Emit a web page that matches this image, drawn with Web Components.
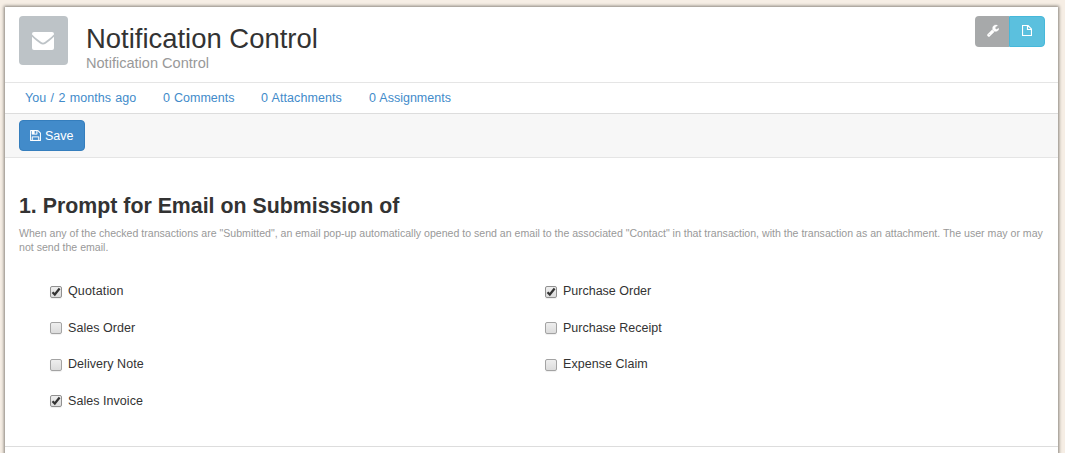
<!DOCTYPE html>
<html lang="en">
<head>
<meta charset="utf-8">
<title>Notification Control</title>
<style>
html{height:100%;overflow:hidden}
body{margin:0;height:100%;overflow:hidden;background:#f6eee5;font:12.5px/18px "Liberation Sans",Arial,sans-serif;color:#333}
</style>
</head>
<body>
<app-page>
  <page-header heading="Notification Control" sub="Notification Control"></page-header>
  <info-bar>
    <info-link style="width:111px;letter-spacing:.02px;word-spacing:.9px">You / 2 months ago</info-link>
    <info-link style="width:71px">0 Comments</info-link>
    <info-link style="width:81px;letter-spacing:.08px">0 Attachments</info-link>
    <info-link style="width:82px">0 Assignments</info-link>
  </info-bar>
  <tool-bar><save-button>Save</save-button></tool-bar>
  <form-section>
    <span slot="title">1. Prompt for Email on Submission of</span>
    <span slot="desc">When any of the checked transactions are "Submitted", an email pop-up automatically opened to send an email to the associated "Contact" in that transaction, with the transaction as an attachment. The user may or may not send the email.</span>
    <check-field checked style="letter-spacing:.15px">Quotation</check-field>
    <check-field>Sales Order</check-field>
    <check-field>Delivery Note</check-field>
    <check-field checked>Sales Invoice</check-field>
    <check-field slot="right" checked style="letter-spacing:0">Purchase Order</check-field>
    <check-field slot="right" style="letter-spacing:0">Purchase Receipt</check-field>
    <check-field slot="right">Expense Claim</check-field>
  </form-section>
</app-page>
<script>
const define = (name, html) => customElements.define(name, class extends HTMLElement {
  constructor() {
    super();
    const attr = k => this.getAttribute(k) || '';
    this.attachShadow({ mode: 'open' }).innerHTML = typeof html === 'function' ? html(attr) : html;
  }
});

define('app-page', `<style>
:host{display:block;box-sizing:border-box;height:470px;margin:0 7px 0 5px;padding-top:7px}
.card{height:100%;background:#fff;box-shadow:0 0 3px 1px #86807a}
</style><div class="card"><slot></slot></div>`);

define('page-header', a => `<style>
:host{display:flex;box-sizing:border-box;height:76px;padding:9px 13px 0 14px;border-bottom:1px solid #e5e5e5}
.avatar{width:49px;height:49px;border-radius:4px;background:#bdc3c7;margin-right:18px}
.avatar svg{display:block;margin:16px 0 0 13px}
.titles{flex:1;padding-top:7px}
h1{margin:0;font-weight:400;font-size:27.450px;line-height:32px;color:#333}
p{margin:0;font-size:14.570px;line-height:17px;color:#999}
.group{display:flex;height:31px}
.btn{box-sizing:border-box;height:31px;display:flex;align-items:center;justify-content:center}
.tool{width:34px;background:#a7a9aa;border-radius:4px 0 0 4px}
.new{width:36px;background:#5bc0de;border:1px solid #46b8da;border-radius:0 4px 4px 0}
</style>
<div class="avatar"><svg width="22" height="18" viewBox="0 0 22 18"><path fill="#fff" d="M2 0h18q2 0 2 2v14q0 2-2 2H2q-2 0-2-2V2q0-2 2-2z"/><path fill="none" stroke="#bdc3c7" stroke-width="1.800" d="M-.5 3Q2 5.800 5 8l3.600 2.800q2.400 1.800 4.800 0L17 8q3-2.200 5.500-5"/></svg></div>
<div class="titles"><h1>${a('heading')}</h1><p>${a('sub')}</p></div>
<div class="group">
<div class="btn tool"><svg width="12" height="13" viewBox="0 0 1664 1792" style="margin:0 -2px 2px 0"><path fill="#fff" stroke="#fff" stroke-width="40" transform="matrix(1 0 0 -1 0 1536)" d="M384 64q0 26 -19 45t-45 19t-45 -19t-19 -45t19 -45t45 -19t45 19t19 45zM1028 484l-682 -682q-37 -37 -90 -37q-52 0 -91 37l-106 108q-38 36 -38 90q0 53 38 91l681 681q39 -98 114.500 -173.500t173.500 -114.500zM1662 919q0 -39 -23 -106q-47 -134 -164.500 -217.500t-258.500 -83.500q-185 0 -316.500 131.500t-131.500 316.500t131.500 316.500t316.500 131.500q58 0 121.500 -16.500t107.500 -46.500q16 -11 16 -28t-16 -28l-293 -169v-224l193 -107q5 3 79 48.500t135.500 81t70.500 35.500q15 0 23.500 -10t8.500 -25z"/></svg></div>
<div class="btn new"><svg width="10" height="11" viewBox="0 0 10 11" style="margin:0 0 2px 0"><path fill="none" stroke="#fff" stroke-width="1.200" d="M.5.500h5.500L9.500 4v6.500h-9zM5.500.500v4h4"/></svg></div>
</div>`);

define('info-bar', `<style>
:host{display:flex;box-sizing:border-box;height:31px;padding:6px 0 0 20px;gap:27px;border-bottom:1px solid #ddd}
</style><slot></slot>`);

define('info-link', `<style>:host{display:block;color:#428bca;white-space:nowrap;word-spacing:.6px}</style><slot></slot>`);

define('tool-bar', `<style>
:host{display:flex;box-sizing:border-box;height:44px;padding:6px 14px;background:#f7f7f7;border-bottom:1px solid #e5e5e5}
</style><slot></slot>`);

define('save-button', `<style>
:host{display:flex;box-sizing:border-box;width:66px;height:31px;padding-left:10px;align-items:center;color:#fff;background:#428bca;border:1px solid #357ebd;border-radius:4px}
svg{margin-right:4px}
</style><svg width="11" height="11" viewBox="0 0 1536 1536"><path fill="#fff" stroke="#fff" stroke-width="30" transform="matrix(1 0 0 -1 0 1408)" d="M384 0h768v384h-768v-384zM1280 0h128v896q0 14 -10 38.500t-20 34.500l-281 281q-10 10 -34 20t-39 10v-416q0 -40 -28 -68t-68 -28h-576q-40 0 -68 28t-28 68v416h-128v-1280h128v416q0 40 28 68t68 28h832q40 0 68 -28t28 -68v-416zM896 928v320q0 13 -9.500 22.500t-22.500 9.500h-192q-13 0 -22.500 -9.500t-9.500 -22.500v-320q0 -13 9.500 -22.500t22.500 -9.500h192q13 0 22.500 9.500t9.500 22.500zM1536 896v-928q0 -40 -28 -68t-68 -28h-1344q-40 0 -68 28t-28 68v1344q0 40 28 68t68 28h928q40 0 88 -20t76 -48l280 -280q28 -28 48 -76t20 -88z"/></svg><slot></slot>`);

define('form-section', `<style>
:host{display:block;box-sizing:border-box;height:289px;padding:34px 14px 0;border-bottom:1px solid #ddd}
h2{margin:0;font-size:21.330px;line-height:28px;font-weight:700}
p{margin:6px 0 0;font-size:10.590px;line-height:14px;color:#999}
.cols{display:grid;grid-template-columns:495px 1fr;padding:28px 0 0 31px}
</style><h2><slot name="title"></slot></h2><p><slot name="desc"></slot></p>
<div class="cols"><div><slot></slot></div><div><slot name="right"></slot></div></div>`);

define('check-field', `<style>
:host{display:flex;height:18px;margin-bottom:18.600px;white-space:nowrap;letter-spacing:.05px}
.box{box-sizing:border-box;width:12px;height:12px;margin:3.600px 6px 0 0;border:1px solid #a3a3a3;border-radius:2px;background:linear-gradient(#eee,#dcdcdc);box-shadow:0 1px 1px #0001}
svg{display:none}
:host([checked]) svg{display:block}
:host([checked]) .box{border-color:#909090}
</style><span class="box"><svg width="10" height="10" viewBox="0 0 10 10"><path fill="none" stroke="#333" stroke-width="2.200" d="M1.500 5.200l2.300 2.300L8.600 1.500"/></svg></span><slot></slot>`);
</script>
</body>
</html>
